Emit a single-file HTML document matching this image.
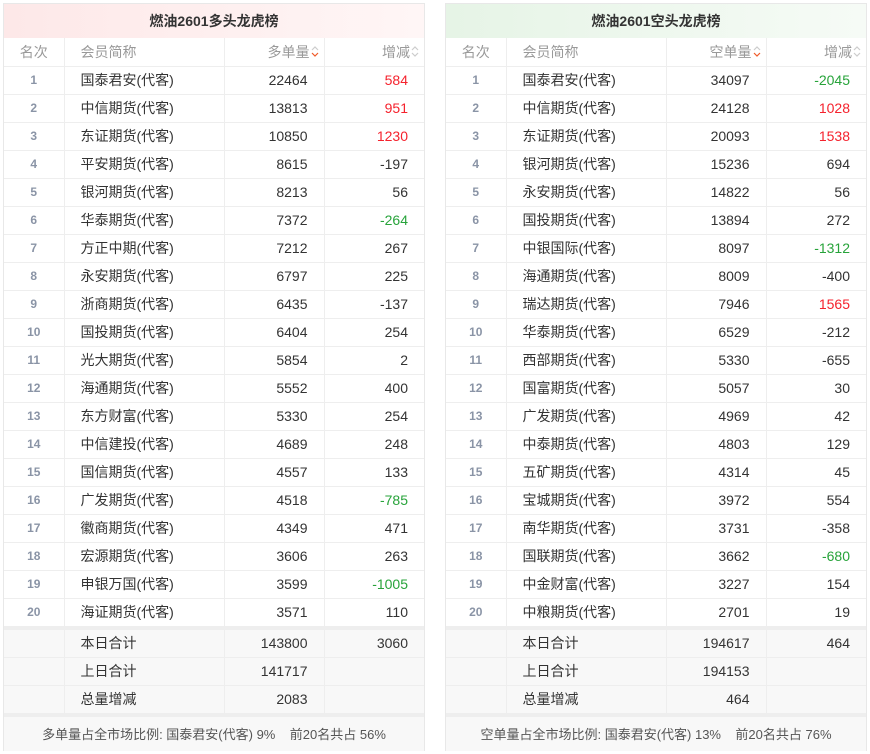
<!DOCTYPE html>
<html><head><meta charset="utf-8"><style>
*{margin:0;padding:0;box-sizing:border-box}
body{width:870px;height:754px;background:#fff;font-family:"Liberation Sans","Noto Sans CJK SC",sans-serif;position:relative;overflow:hidden}
.p{position:absolute;top:3px;width:422px;border:1px solid #e8e8e8;height:748px}
.t{height:34px;line-height:34px;text-align:center;font-weight:bold;font-size:14px;color:#333}
table{border-collapse:collapse;table-layout:fixed;width:420px;font-size:14px;color:#333}
td{height:28px;border:1px solid #eee;padding:0 16px 0 0;text-align:right;white-space:nowrap}
tr td:first-child{border-left:none}
tr td:last-child{border-right:none}
td.r{text-align:center;padding:0;font-size:12px;font-weight:bold;color:#8a94a6}
td.n{text-align:left;padding-left:16px}
th{height:28px;font-weight:normal;color:#999;font-size:14px;border:1px solid #eee;border-top:none;text-align:right;padding-right:5px}
th:first-child{border-left:none;text-align:center;padding:0}
th:last-child{border-right:none}
th.n{text-align:left;padding-left:16px}
th svg{vertical-align:-1px;margin-left:1px}
.red{color:#f5222d}.grn{color:#27a33a}
tr.s td{background:#f8f8f8}
tr.gap td{height:3px;background:#eee;border:none}
.f{height:37px;line-height:36px;text-align:center;font-size:13px;color:#555;background:#f8f8f8;border-top:3px solid #eee}
</style></head><body>

<div class="p" style="left:3px">
<div class="t" style="background:linear-gradient(90deg,#fde8e8,#fff6f6)">燃油2601多头龙虎榜</div>
<table>
<colgroup><col style="width:60px"><col style="width:160px"><col style="width:100px"><col style="width:100px"></colgroup>
<tr><th>名次</th><th class="n">会员简称</th><th>多单量<svg width="8" height="13" viewBox="0 0 8 13"><path d="M1 5L4 2L7 5" fill="none" stroke="#ccc" stroke-width="1.2"/><path d="M1 8L4 11L7 8" fill="none" stroke="#f05a28" stroke-width="1.2"/></svg></th><th>增减<svg width="8" height="13" viewBox="0 0 8 13"><path d="M1 5L4 2L7 5" fill="none" stroke="#ccc" stroke-width="1.2"/><path d="M1 8L4 11L7 8" fill="none" stroke="#ccc" stroke-width="1.2"/></svg></th></tr>
<tr><td class="r">1</td><td class="n">国泰君安(代客)</td><td>22464</td><td class="red">584</td></tr>
<tr><td class="r">2</td><td class="n">中信期货(代客)</td><td>13813</td><td class="red">951</td></tr>
<tr><td class="r">3</td><td class="n">东证期货(代客)</td><td>10850</td><td class="red">1230</td></tr>
<tr><td class="r">4</td><td class="n">平安期货(代客)</td><td>8615</td><td>-197</td></tr>
<tr><td class="r">5</td><td class="n">银河期货(代客)</td><td>8213</td><td>56</td></tr>
<tr><td class="r">6</td><td class="n">华泰期货(代客)</td><td>7372</td><td class="grn">-264</td></tr>
<tr><td class="r">7</td><td class="n">方正中期(代客)</td><td>7212</td><td>267</td></tr>
<tr><td class="r">8</td><td class="n">永安期货(代客)</td><td>6797</td><td>225</td></tr>
<tr><td class="r">9</td><td class="n">浙商期货(代客)</td><td>6435</td><td>-137</td></tr>
<tr><td class="r">10</td><td class="n">国投期货(代客)</td><td>6404</td><td>254</td></tr>
<tr><td class="r">11</td><td class="n">光大期货(代客)</td><td>5854</td><td>2</td></tr>
<tr><td class="r">12</td><td class="n">海通期货(代客)</td><td>5552</td><td>400</td></tr>
<tr><td class="r">13</td><td class="n">东方财富(代客)</td><td>5330</td><td>254</td></tr>
<tr><td class="r">14</td><td class="n">中信建投(代客)</td><td>4689</td><td>248</td></tr>
<tr><td class="r">15</td><td class="n">国信期货(代客)</td><td>4557</td><td>133</td></tr>
<tr><td class="r">16</td><td class="n">广发期货(代客)</td><td>4518</td><td class="grn">-785</td></tr>
<tr><td class="r">17</td><td class="n">徽商期货(代客)</td><td>4349</td><td>471</td></tr>
<tr><td class="r">18</td><td class="n">宏源期货(代客)</td><td>3606</td><td>263</td></tr>
<tr><td class="r">19</td><td class="n">申银万国(代客)</td><td>3599</td><td class="grn">-1005</td></tr>
<tr><td class="r">20</td><td class="n">海证期货(代客)</td><td>3571</td><td>110</td></tr>
<tr class="gap"><td colspan="4"></td></tr>
<tr class="s"><td class="r"></td><td class="n">本日合计</td><td>143800</td><td>3060</td></tr>
<tr class="s"><td class="r"></td><td class="n">上日合计</td><td>141717</td><td></td></tr>
<tr class="s"><td class="r"></td><td class="n">总量增减</td><td>2083</td><td></td></tr>
</table>
<div class="f">多单量占全市场比例: 国泰君安(代客) 9%&nbsp;&nbsp;&nbsp;&nbsp;前20名共占 56%</div>
</div>

<div class="p" style="left:445px">
<div class="t" style="background:linear-gradient(90deg,#e6f4e6,#f6fbf6)">燃油2601空头龙虎榜</div>
<table>
<colgroup><col style="width:60px"><col style="width:160px"><col style="width:100px"><col style="width:100px"></colgroup>
<tr><th>名次</th><th class="n">会员简称</th><th>空单量<svg width="8" height="13" viewBox="0 0 8 13"><path d="M1 5L4 2L7 5" fill="none" stroke="#ccc" stroke-width="1.2"/><path d="M1 8L4 11L7 8" fill="none" stroke="#f05a28" stroke-width="1.2"/></svg></th><th>增减<svg width="8" height="13" viewBox="0 0 8 13"><path d="M1 5L4 2L7 5" fill="none" stroke="#ccc" stroke-width="1.2"/><path d="M1 8L4 11L7 8" fill="none" stroke="#ccc" stroke-width="1.2"/></svg></th></tr>
<tr><td class="r">1</td><td class="n">国泰君安(代客)</td><td>34097</td><td class="grn">-2045</td></tr>
<tr><td class="r">2</td><td class="n">中信期货(代客)</td><td>24128</td><td class="red">1028</td></tr>
<tr><td class="r">3</td><td class="n">东证期货(代客)</td><td>20093</td><td class="red">1538</td></tr>
<tr><td class="r">4</td><td class="n">银河期货(代客)</td><td>15236</td><td>694</td></tr>
<tr><td class="r">5</td><td class="n">永安期货(代客)</td><td>14822</td><td>56</td></tr>
<tr><td class="r">6</td><td class="n">国投期货(代客)</td><td>13894</td><td>272</td></tr>
<tr><td class="r">7</td><td class="n">中银国际(代客)</td><td>8097</td><td class="grn">-1312</td></tr>
<tr><td class="r">8</td><td class="n">海通期货(代客)</td><td>8009</td><td>-400</td></tr>
<tr><td class="r">9</td><td class="n">瑞达期货(代客)</td><td>7946</td><td class="red">1565</td></tr>
<tr><td class="r">10</td><td class="n">华泰期货(代客)</td><td>6529</td><td>-212</td></tr>
<tr><td class="r">11</td><td class="n">西部期货(代客)</td><td>5330</td><td>-655</td></tr>
<tr><td class="r">12</td><td class="n">国富期货(代客)</td><td>5057</td><td>30</td></tr>
<tr><td class="r">13</td><td class="n">广发期货(代客)</td><td>4969</td><td>42</td></tr>
<tr><td class="r">14</td><td class="n">中泰期货(代客)</td><td>4803</td><td>129</td></tr>
<tr><td class="r">15</td><td class="n">五矿期货(代客)</td><td>4314</td><td>45</td></tr>
<tr><td class="r">16</td><td class="n">宝城期货(代客)</td><td>3972</td><td>554</td></tr>
<tr><td class="r">17</td><td class="n">南华期货(代客)</td><td>3731</td><td>-358</td></tr>
<tr><td class="r">18</td><td class="n">国联期货(代客)</td><td>3662</td><td class="grn">-680</td></tr>
<tr><td class="r">19</td><td class="n">中金财富(代客)</td><td>3227</td><td>154</td></tr>
<tr><td class="r">20</td><td class="n">中粮期货(代客)</td><td>2701</td><td>19</td></tr>
<tr class="gap"><td colspan="4"></td></tr>
<tr class="s"><td class="r"></td><td class="n">本日合计</td><td>194617</td><td>464</td></tr>
<tr class="s"><td class="r"></td><td class="n">上日合计</td><td>194153</td><td></td></tr>
<tr class="s"><td class="r"></td><td class="n">总量增减</td><td>464</td><td></td></tr>
</table>
<div class="f">空单量占全市场比例: 国泰君安(代客) 13%&nbsp;&nbsp;&nbsp;&nbsp;前20名共占 76%</div>
</div>
</body></html>
